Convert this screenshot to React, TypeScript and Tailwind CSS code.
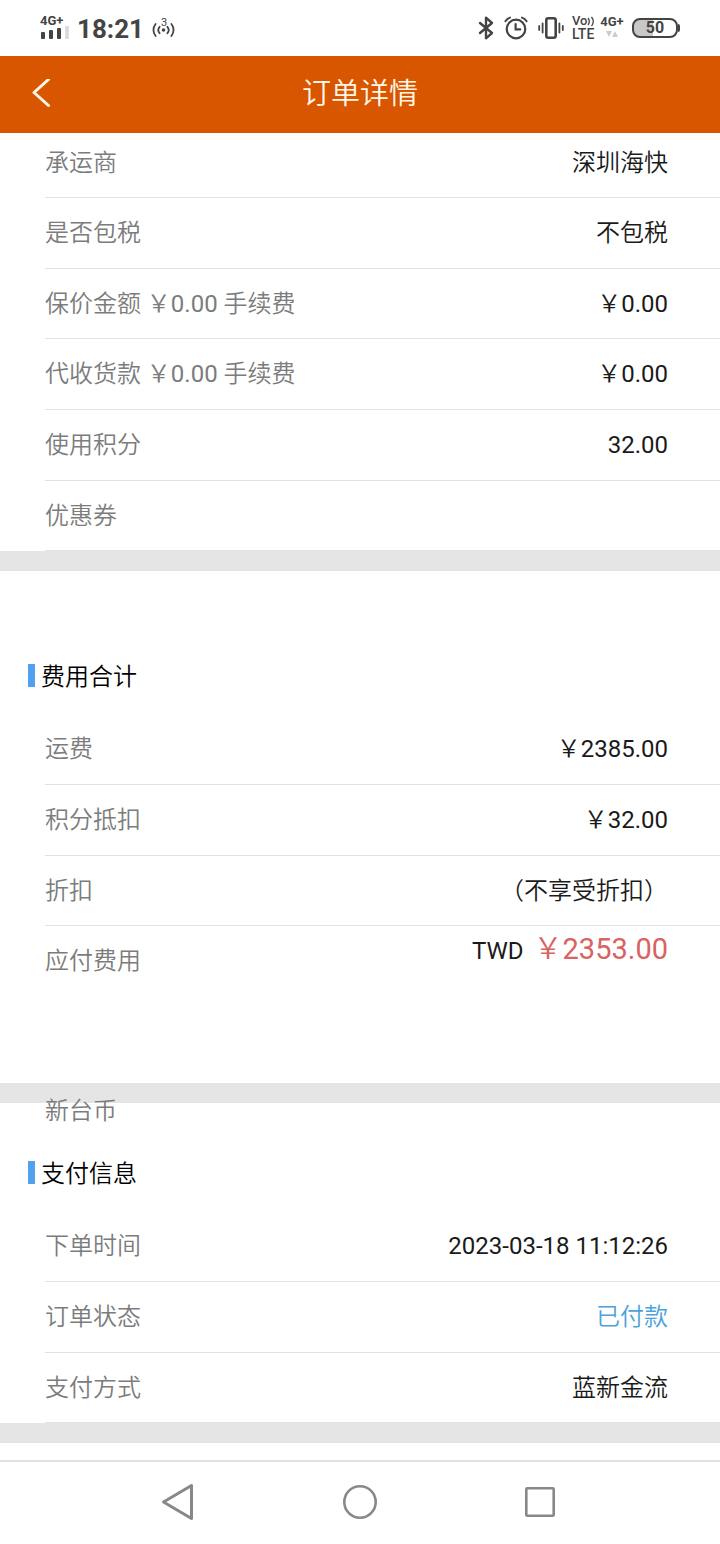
import React from "react";

interface RowProps {
	label: React.ReactNode;
	children?: React.ReactNode;
	className?: string;
}

const BODY_FONT = "font-[Roboto,'Noto_Sans_CJK_SC',sans-serif]";

// keeps digits and latin letters at regular weight next to the light CJK text
const Num: React.FC<{ children: React.ReactNode }> = ({ children }) => {
	return <span className="font-normal">{children}</span>;
};

// full-width yen sign followed by the amount
const Money: React.FC<{ value: string }> = ({ value }) => {
	return (
		<>
			{"\uffe5"}
			<Num>{value}</Num>
		</>
	);
};

const Row: React.FC<RowProps> = ({ label, children, className }) => {
	return (
		<div
			className={`ml-[45px] flex items-center justify-between border-b border-[#e2e2e2] pr-[52px] ${
				className || "h-[71px] nth-[3n]:h-[70px]"
			}`}
		>
			<dt className="text-[#7c7c7c]">{label}</dt>
			<dd className="text-[#1a1a1a]">{children}</dd>
		</div>
	);
};

const Title: React.FC<{ children: React.ReactNode }> = ({ children }) => {
	return (
		<h2 className="mb-6 ml-7 flex items-start gap-[6px] leading-[26px] text-black">
			<span className="h-[23px] w-[7px] bg-[#50a2ef]" />
			{children}
		</h2>
	);
};

const Divider: React.FC = () => <div className="h-5 bg-[#e5e5e5]" />;

const SignalIcon: React.FC = () => {
	return (
		<div className="flex w-[29px] flex-col">
			<span className="text-[13px] leading-[10px] font-bold">4G+</span>
			<svg width="29" height="14" viewBox="0 0 29 14" fill="currentColor">
				<rect x="1" y="6" width="4" height="7" rx="1" />
				<rect x="9" y="4" width="4" height="9" rx="1" />
				<rect x="17" y="2" width="4" height="11" rx="1" />
				<rect x="25" y="0" width="4" height="13" rx="1" fill="#dcdcdc" />
			</svg>
		</div>
	);
};

const HotspotIcon: React.FC = () => {
	return (
		<div className="relative h-[24px] w-[24px]">
			<span className="absolute inset-x-0 top-[2px] text-center text-[11px] leading-[10px] font-normal">
				3
			</span>
			<svg
				width="24"
				height="24"
				viewBox="0 0 24 24"
				fill="none"
				stroke="currentColor"
				strokeWidth="1.8"
				strokeLinecap="round"
			>
				<circle cx="11.5" cy="14" r="1.8" fill="currentColor" stroke="none" />
				<path d="M7.6 10.8a5 5 0 0 0 0 6.4M15.4 10.8a5 5 0 0 1 0 6.4" />
				<path d="M3.6 8a9.500 9.500 0 0 0 0 12M19.4 8a9.500 9.500 0 0 1 0 12" />
			</svg>
		</div>
	);
};

const BluetoothIcon: React.FC = () => {
	return (
		<svg
			width="16"
			height="24"
			viewBox="0 0 16 24"
			fill="none"
			stroke="currentColor"
			strokeWidth="2.4"
			strokeLinejoin="round"
			strokeLinecap="round"
		>
			<path d="M2 7l12 10-6 5.3V1.7L14 7 2 17" />
		</svg>
	);
};

const AlarmIcon: React.FC = () => {
	return (
		<svg
			width="24"
			height="24"
			viewBox="0 0 24 24"
			fill="none"
			stroke="currentColor"
			strokeWidth="2.2"
			strokeLinecap="round"
		>
			<circle cx="12" cy="13" r="9.3" />
			<path d="M11.6 8.2v5.2h4.6" />
			<path d="M1.4 5.2Q3 2.6 6 1.6M22.600 5.2Q21 2.6 18 1.6" strokeWidth="2" />
		</svg>
	);
};

const VibrateIcon: React.FC = () => {
	return (
		<svg
			width="26"
			height="24"
			viewBox="0 0 26 24"
			fill="none"
			stroke="currentColor"
			strokeLinecap="round"
		>
			<rect x="8.3" y="2.2" width="9.4" height="19.6" rx="2" strokeWidth="2.6" />
			<path d="M4.6 7.500v9M21.400 7.500v9M1.2 10v4M24.800 10v4" strokeWidth="1.8" />
		</svg>
	);
};

const StatusBar: React.FC = () => {
	return (
		<div className="flex h-14 items-center justify-between px-10 text-[#444]">
			<div className="flex items-center">
				<SignalIcon />
				<span className="mt-[2px] ml-2 text-[26px] leading-7 font-bold">18:21</span>
				<span className="ml-2">
					<HotspotIcon />
				</span>
			</div>
			<div className="flex items-center">
				<BluetoothIcon />
				<span className="ml-[10px]">
					<AlarmIcon />
				</span>
				<span className="ml-[10px]">
					<VibrateIcon />
				</span>
				<div className="ml-2 flex w-6 flex-col">
					<span className="flex text-[13px] leading-3 font-medium">
						Vo
						<svg
							width="8"
							height="12"
							viewBox="0 0 8 12"
							fill="none"
							stroke="currentColor"
							strokeWidth="1.3"
						>
							<path d="M1 3q2.6 3.500 0 7M4.500 2q3.600 4.500 0 9" />
						</svg>
					</span>
					<span className="text-sm leading-[14px] font-medium">LTE</span>
				</div>
				<div className="ml-1 flex w-6 flex-col items-center">
					<span className="text-[13px] leading-[10px] font-bold">4G+</span>
					<svg className="mt-1" width="12" height="8" viewBox="0 0 12 8" fill="#ccc">
						<path d="M0 0h6l-3 6zM6 6h6l-3-6z" />
					</svg>
				</div>
				<div className="ml-2 flex items-center">
					<span className="flex h-5 w-[46px] items-center justify-center rounded-lg border-2 border-current bg-linear-to-r from-[#c8c8c8] from-45% to-white to-45% text-base leading-4 font-bold">
						50
					</span>
					<span className="h-2 w-[2px] rounded-r bg-current" />
				</div>
			</div>
		</div>
	);
};

const Header: React.FC = () => {
	return (
		<header className="grid h-[77px] grid-cols-[1fr_auto_1fr] items-center bg-[#d85600] text-[#fff6e6]">
			<button type="button" aria-label="返回" className="ml-8 w-5">
				<svg
					width="20"
					height="32"
					viewBox="0 0 20 32"
					fill="none"
					stroke="currentColor"
					strokeWidth="3"
					strokeLinecap="round"
					strokeLinejoin="round"
				>
					<path d="M16.500 .5L2 13.500L16.500 26.500" />
				</svg>
			</button>
			<h1 className="pb-[2px] text-[29px] leading-9">订单详情</h1>
		</header>
	);
};

const NavBar: React.FC = () => {
	return (
		<nav className="grid h-[84px] grid-cols-3 items-center justify-items-center border-t-2 border-[#e0e0e0] px-[12.5%] pb-[2px] text-[#888]">
			<button type="button" aria-label="后退">
				<svg
					width="40"
					height="40"
					viewBox="0 0 40 40"
					fill="none"
					stroke="currentColor"
					strokeWidth="3"
					strokeLinejoin="round"
				>
					<path d="M3.500 20L31.500 3.500V36.500Z" />
				</svg>
			</button>
			<button type="button" aria-label="主页">
				<svg width="40" height="40" viewBox="0 0 40 40" fill="none">
					<circle cx="20" cy="20" r="15.7" stroke="currentColor" strokeWidth="2.6" />
				</svg>
			</button>
			<button type="button" aria-label="最近任务">
				<svg width="40" height="40" viewBox="0 0 40 40" fill="none">
					<rect
						x="6.3"
						y="6.3"
						width="27.4"
						height="27.4"
						rx="1"
						stroke="currentColor"
						strokeWidth="2.6"
					/>
				</svg>
			</button>
		</nav>
	);
};

const App: React.FC = () => {
	return (
		<div className={`bg-white text-2xl font-[350] ${BODY_FONT}`}>
			<StatusBar />
			<Header />
			<main>
				<dl>
					<Row label="承运商" className="h-[65px] pb-1">
						深圳海快
					</Row>
					<Row label="是否包税">不包税</Row>
					<Row
						label={
							<>
								保价金额 <Money value="0.00" /> 手续费
							</>
						}
					>
						<Money value="0.00" />
					</Row>
					<Row
						label={
							<>
								代收货款 <Money value="0.00" /> 手续费
							</>
						}
					>
						<Money value="0.00" />
					</Row>
					<Row label="使用积分">
						<Num>32.00</Num>
					</Row>
					<Row label="优惠券" />
				</dl>
				<Divider />
				<section className="pt-[93px]">
					<Title>费用合计</Title>
					<dl>
						<Row label="运费">
							<Money value="2385.00" />
						</Row>
						<Row label="积分抵扣">
							<Money value="32.00" />
						</Row>
						<Row label="折扣">（不享受折扣）</Row>
						<div className="relative ml-[45px] flex h-[157px] items-start justify-between pr-[52px]">
							<dt className="leading-[70px] text-[#7c7c7c]">
								应付费用
								<span className="absolute top-[150px] left-0">新台币</span>
							</dt>
							<dd className="leading-[46px] text-[#1a1a1a]">
								<Num>TWD </Num>
								<span className="ml-1 text-[29px] text-[#d96262]">
									<Money value="2353.00" />
								</span>
							</dd>
						</div>
					</dl>
				</section>
				<Divider />
				<section className="pt-[58px]">
					<Title>支付信息</Title>
					<dl>
						<Row label="下单时间">
							<Num>2023-03-18 11:12:26</Num>
						</Row>
						<Row label="订单状态">
							<span className="text-[#4ba3dc]">已付款</span>
						</Row>
						<Row label="支付方式">蓝新金流</Row>
					</dl>
				</section>
				<Divider />
			</main>
			<div className="h-[17px]" />
			<NavBar />
		</div>
	);
};

export default App;
